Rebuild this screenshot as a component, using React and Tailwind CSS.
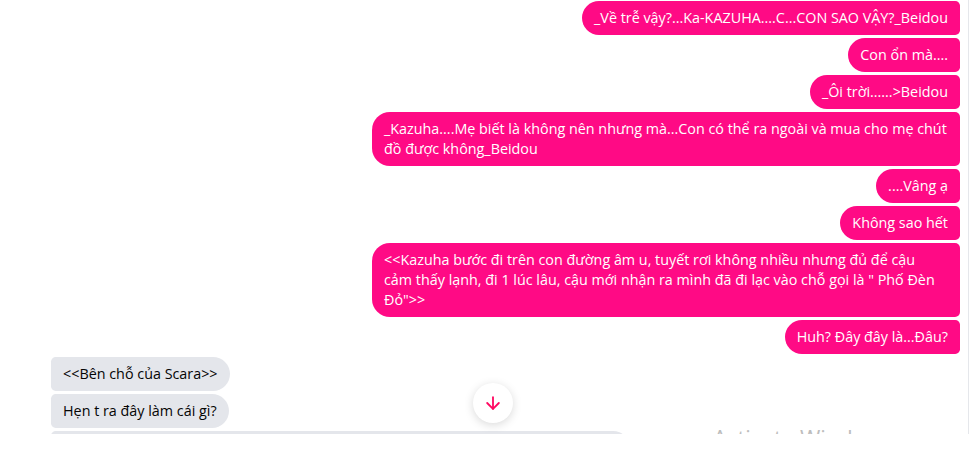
import { ArrowDown } from 'lucide-react';

const messages = [
  { me: true, text: '_Về trễ vậy?...Ka-KAZUHA....C...CON SAO VẬY?_Beidou' },
  { me: true, text: 'Con ổn mà....' },
  { me: true, text: '_Ôi trời......>Beidou' },
  { me: true, text: '_Kazuha....Mẹ biết là không nên nhưng mà...Con có thể ra ngoài và mua cho mẹ chút đồ được không_Beidou' },
  { me: true, text: '....Vâng ạ' },
  { me: true, text: 'Không sao hết' },
  { me: true, wide: 'w-[588px]', text: '<<Kazuha bước đi trên con đường âm u, tuyết rơi không nhiều nhưng đủ để cậu\ncảm thấy lạnh, đi 1 lúc lâu, cậu mới nhận ra mình đã đi lạc vào chỗ gọi là " Phố Đèn\nĐỏ">>' },
  { me: true, text: 'Huh? Đây đây là...Đâu?' },
  { me: false, text: '<<Bên chỗ của Scara>>' },
  { me: false, text: 'Hẹn t ra đây làm cái gì?' },
  { me: false, wide: 'w-[579px]', text: 'Mày có biết là tao đang bận lắm không hả, nói nhanh lên rồi còn về nữa' },
];

export default function App() {
  return (
    <div className="w-[970px] h-[460px] bg-white relative" style={{ fontFamily: '"Open Sans", "Noto Sans", sans-serif' }}>
      <div className="h-[434px] w-[969px] overflow-hidden border-r border-gray-200 relative">
        <div className="flex flex-col gap-[3px] pl-[51px] pr-[8px] pt-px">
          {messages.map((m, i) => (
            <div key={i} className={m.me ? 'flex justify-end' : 'flex justify-start'}>
              <div
                className={
                  (m.wide || '') +
                  (m.me
                    ? ' max-w-[588px] whitespace-pre-line bg-[#ff0a85] text-white rounded-l-[18px] rounded-r-[5px] px-3 py-[7px] text-[14.35px] leading-5'
                    : ' max-w-[588px] whitespace-pre-line bg-[#e4e6eb] text-[#050505] rounded-r-[18px] rounded-l-[5px] px-3 py-[7px] text-[14.35px] leading-5')
                }
              >
                {m.text}
              </div>
            </div>
          ))}
        </div>
        <div className="absolute left-[713px] top-[423px] text-[22px] leading-7 text-[#bdbdbd] whitespace-nowrap">
          Activate Windows
        </div>
      </div>
      <button className="absolute left-[473px] top-[383px] w-10 h-10 rounded-full bg-white shadow-[0_2px_10px_rgba(0,0,0,0.15)] flex items-center justify-center">
        <ArrowDown className="w-5 h-5 text-[#ff0a62]" strokeWidth={2.2} />
      </button>
    </div>
  );
}
